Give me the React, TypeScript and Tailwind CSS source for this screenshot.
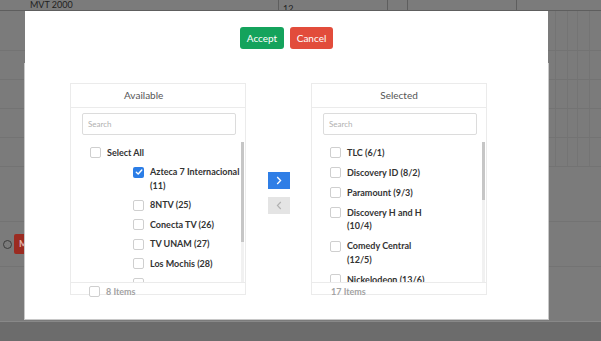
import React from 'react';

type Item = { lines: string[]; checked?: boolean };

const available: Item[] = [
  { lines: ['Azteca 7 Internacional', '(11)'], checked: true },
  { lines: ['8NTV (25)'] },
  { lines: ['Conecta TV (26)'] },
  { lines: ['TV UNAM (27)'] },
  { lines: ['Los Mochis (28)'] },
  { lines: [''] },
];

const selected: Item[] = [
  { lines: ['TLC (6/1)'] },
  { lines: ['Discovery ID (8/2)'] },
  { lines: ['Paramount (9/3)'] },
  { lines: ['Discovery H and H', '(10/4)'] },
  { lines: ['Comedy Central', '(12/5)'] },
  { lines: ['Nickelodeon (13/6)'] },
  { lines: ['History (14/7)'] },
];

function Checkbox({ checked }: { checked?: boolean }) {
  if (checked) {
    return (
      <div className="w-[11px] h-[11px] shrink-0 rounded-[2px] bg-[#2b7de6] flex items-center justify-center">
        <svg width="8" height="8" viewBox="0 0 8 8" fill="none">
          <path d="M1.3 4.2 L3.2 6 L6.8 2" stroke="white" strokeWidth="1.4" strokeLinecap="round" strokeLinejoin="round" />
        </svg>
      </div>
    );
  }
  return <div className="w-[11px] h-[11px] shrink-0 rounded-[2px] border border-[#cfcfcf] bg-white" />;
}

function Row({ item, indent, pad }: { item: Item; indent: string; pad: string }) {
  return (
    <div className={`flex items-start gap-[6px] ${pad} ${indent}`}>
      <div className="mt-[1.5px]">
        <Checkbox checked={item.checked} />
      </div>
      <div className="text-[9px] leading-[13.5px] font-bold text-[#333] whitespace-nowrap">
        {item.lines.map((l, i) => (
          <div key={i} className="h-[13.5px]">{l}</div>
        ))}
      </div>
    </div>
  );
}

function Panel({
  title,
  titleClass,
  children,
  thumb,
  footer,
}: {
  title: string;
  titleClass: string;
  children: React.ReactNode;
  thumb: string;
  footer: React.ReactNode;
}) {
  return (
    <div className="w-[176px] h-[212px] border border-[#ebebeb] flex flex-col">
      <div className={`h-[24px] shrink-0 border-b border-[#ebebeb] flex items-center text-[10px] text-[#555] ${titleClass}`}>{title}</div>
      <div className="mt-[5px] ml-[11px] w-[154px] h-[22px] shrink-0 border border-[#dcdcdc] rounded-[2px] flex items-center pl-[5px] text-[8px] text-[#b0b0b0]">
        Search
      </div>
      <div className="mt-[7px] h-[140px] shrink-0 flex">
        <div className="flex-1 overflow-hidden pt-[0.5px]">{children}</div>
        <div className="w-[3px] mr-[1.5px] bg-[#f1f1f1] flex flex-col">
          <div className={`bg-[#c6c6c6] ${thumb}`} />
        </div>
      </div>
      <div className="h-[11px] shrink-0 border-t border-[#ebebeb]">{footer}</div>
    </div>
  );
}

function GridRow({ h }: { h: string }) {
  return (
    <div className={`${h} border-b border-[#737373] flex shrink-0`}>
      <div className="w-[555px]" />
      <div className="w-[12px] border-l border-[#747474]" />
      <div className="w-[10px] border-l border-[#747474]" />
      <div className="w-[12px] border-l border-[#747474]" />
      <div className="flex-1 border-l border-[#747474]" />
    </div>
  );
}

export default function App() {
  return (
    <div className="relative w-[601px] h-[341px] overflow-hidden bg-[#7b7b7b] font-['Lato',sans-serif]">
      {/* page behind the backdrop */}
      <div className="flex flex-col h-full">
        <div className="h-[11px] border-b border-[#5e5e5e] flex shrink-0 text-[9px] text-[#1f1f1f] overflow-hidden">
          <div className="w-[279px] border-r border-[#5e5e5e] pl-[30px] leading-[9px]">MVT 2000</div>
          <div className="w-[109px] border-r border-[#5e5e5e] pl-[4px] pt-[4px] leading-[9px]">12</div>
          <div className="w-[20px] border-r border-[#5e5e5e]" />
          <div className="w-[109px] border-r border-[#5e5e5e]" />
          <div className="flex-1" />
        </div>
        <GridRow h="h-[40px]" />
        <GridRow h="h-[29px]" />
        <GridRow h="h-[29px]" />
        <GridRow h="h-[29px]" />
        <GridRow h="h-[29px]" />
        <div className="h-[55px] border-b border-[#737373] shrink-0" />
        <div className="h-[45px] border-b border-[#737373] shrink-0 flex items-center pl-[3px] gap-[2px]">
          <div className="w-[9px] h-[9px] rounded-full border border-[#3c3c3c]" />
          <div className="w-[40px] h-[20px] rounded-[2px] bg-[#9b2b21] text-[9px] font-bold text-[#e2b3ad] flex items-center pl-[5px]">
            M
          </div>
        </div>
        <div className="h-[54px] shrink-0" />
        <div className="flex-1 bg-[#6c6c6c] border-t border-[#888]" />
      </div>

      {/* modal */}
      <div className="absolute left-[24px] top-[63px] w-[525px] h-[257px] bg-[#c8c8c8]" />
      <div className="absolute left-[25px] top-[11px] w-[523px] h-[308px] bg-white flex flex-col">
        <div className="pt-[16px] flex justify-center gap-[6px]">
          <button className="w-[44px] h-[22px] rounded-[3px] bg-[#14a35c] text-white text-[10px]">Accept</button>
          <button className="w-[43px] h-[22px] rounded-[3px] bg-[#e24c3b] text-white text-[10px]">Cancel</button>
        </div>
        <div className="mt-[34px] pl-[45px] flex">
          <Panel
            title="Available"
            titleClass="pl-[53px]"
            thumb="h-[100px]"
            footer={
              <div className="flex items-center gap-[6px] pl-[18px] pt-[3px]">
                <Checkbox />
                <span className="text-[9px] font-bold text-[#a3a3a3] leading-[11px]">8 Items</span>
              </div>
            }
          >
            <Row item={{ lines: ['Select All'] }} indent="pl-[19px]" pad="py-[3px]" />
            {available.map((it, i) => (
              <Row key={i} item={it} indent="pl-[62px]" pad="py-[3px]" />
            ))}
          </Panel>
          <div className="w-[65px] flex flex-col items-center pt-[89px] gap-[8px]">
            <div className="w-[22px] h-[17px] bg-[#2f7ee6] flex items-center justify-center">
              <svg width="6" height="9" viewBox="0 0 6 9" fill="none">
                <path d="M1.2 1 L4.6 4.5 L1.2 8" stroke="white" strokeWidth="1.3" />
              </svg>
            </div>
            <div className="w-[22px] h-[17px] bg-[#e4e4e4] flex items-center justify-center">
              <svg width="6" height="9" viewBox="0 0 6 9" fill="none">
                <path d="M4.8 1 L1.4 4.5 L4.8 8" stroke="#b0b0b0" strokeWidth="1.1" />
              </svg>
            </div>
          </div>
          <Panel
            title="Selected"
            titleClass="justify-center"
            thumb="h-[58px]"
            footer={
              <div className="pl-[19px] pt-[3px] text-[9px] font-bold text-[#a3a3a3] leading-[11px]">17 Items</div>
            }
          >
            {selected.map((it, i) => (
              <Row key={i} item={it} indent="pl-[18px]" pad="py-[3.25px]" />
            ))}
          </Panel>
        </div>
      </div>
    </div>
  );
}
